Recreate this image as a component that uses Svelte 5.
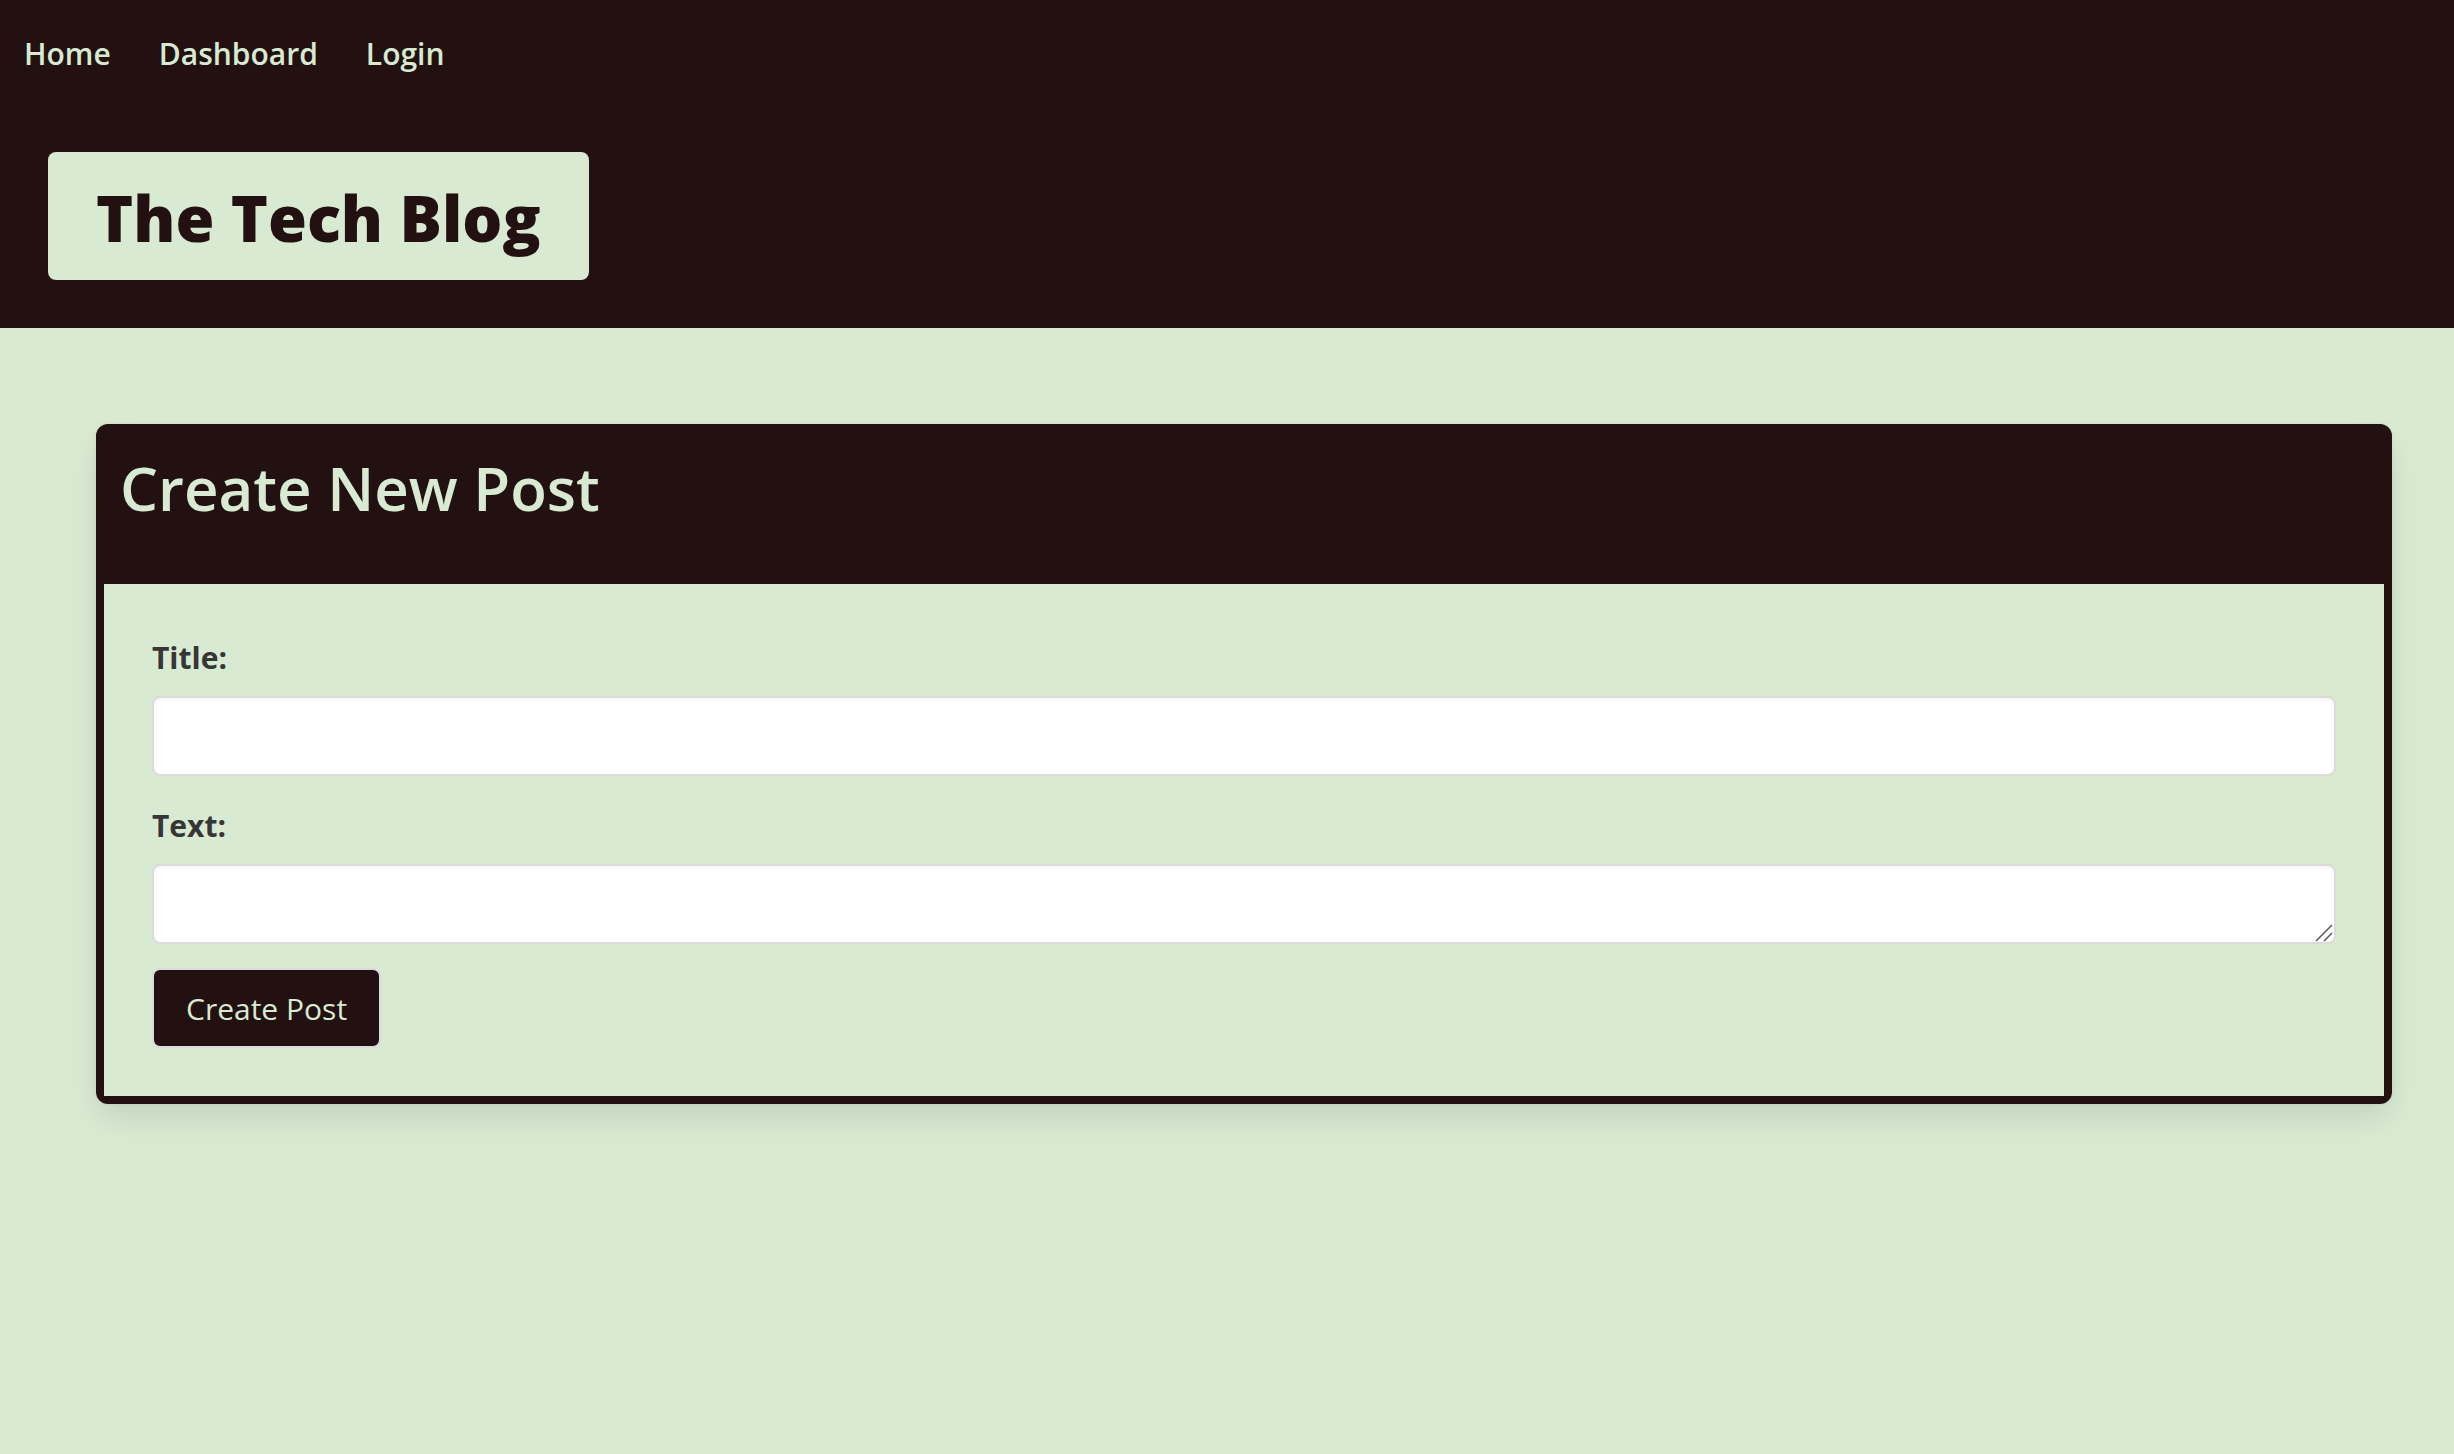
<script>
  const links = [
    { label: 'Home', href: '#home' },
    { label: 'Dashboard', href: '#dashboard' },
    { label: 'Login', href: '#login' }
  ];

  let title = $state('');
  let text = $state('');

  function createPost(event) {
    event.preventDefault();
    title = '';
    text = '';
  }
</script>

<header class="site-header">
  <nav class="nav" aria-label="Main">
    {#each links as link}
      <a class="nav-item" href={link.href}>{link.label}</a>
    {/each}
  </nav>
  <div class="banner">
    <h1 class="brand">The Tech Blog</h1>
  </div>
</header>

<main class="main">
  <section class="card">
    <div class="card-header">
      <h2 class="card-title">Create New Post</h2>
    </div>
    <form class="card-body" onsubmit={createPost}>
      <div class="field">
        <label class="label" for="post-title">Title:</label>
        <input class="control" id="post-title" type="text" bind:value={title} />
      </div>
      <div class="field">
        <label class="label" for="post-text">Text:</label>
        <div class="text-wrap">
          <textarea class="control" id="post-text" rows="1" bind:value={text}></textarea>
          <svg class="grip" viewBox="0 0 18 18" aria-hidden="true">
            <path d="M1 17L17 1M9 17L17 9" />
          </svg>
        </div>
      </div>
      <button class="submit" type="submit">Create Post</button>
    </form>
  </section>
</main>

<style>
  :global(body) {
    margin: 0;
    background: #d8ead2;
    color: #363636;
    font-family: 'Segoe UI', 'Open Sans', 'Noto Sans', sans-serif;
    font-size: 30px;
    line-height: 48px;
  }

  .site-header {
    background: #231111;
  }

  .nav {
    display: flex;
    padding: 30px 0 26px;
  }

  .nav-item {
    padding: 0 24px;
    color: #d8ead2;
    font-weight: 600;
    text-decoration: none;
  }

  .banner {
    display: flex;
    padding: 48px;
  }

  .brand {
    margin: 0;
    padding: 18px 48px 14px;
    border-radius: 8px;
    background: #d8ead2;
    color: #231111;
    font-size: 63px;
    font-weight: 900;
    line-height: 96px;
  }

  .main {
    padding: 96px 62px 96px 96px;
  }

  .card {
    border: 8px solid #231111;
    border-radius: 12px;
    background: #231111;
    box-shadow:
      0 16px 32px -4px rgba(10, 10, 10, 0.1),
      0 0 0 2px rgba(10, 10, 10, 0.02);
  }

  .card-header {
    padding: 20px 16px 60px;
  }

  .card-title {
    margin: 0;
    color: #d8ead2;
    font-size: 60px;
    font-weight: 600;
    line-height: 72px;
  }

  .card-body {
    padding: 48px;
    background: #d8ead2;
  }

  .field {
    margin-bottom: 24px;
  }

  .label {
    display: block;
    margin-bottom: 14px;
    padding-top: 2px;
    font-weight: 700;
  }

  .control {
    display: block;
    box-sizing: border-box;
    width: 100%;
    height: 80px;
    padding: 14px 22px;
    border: 2px solid #dbdbdb;
    border-radius: 8px;
    background: #fff;
    box-shadow: inset 0 2px 4px rgba(10, 10, 10, 0.05);
    color: #363636;
    font: inherit;
  }

  textarea.control {
    resize: vertical;
  }

  textarea.control::-webkit-resizer {
    display: none;
  }

  .text-wrap {
    position: relative;
  }

  .grip {
    position: absolute;
    right: 3px;
    bottom: 2px;
    width: 18px;
    height: 18px;
    fill: none;
    stroke: #555;
    stroke-width: 1.5;
    pointer-events: none;
  }

  .submit {
    display: block;
    height: 80px;
    padding: 2px 32px 0;
    border: 2px solid #dbdbdb;
    border-radius: 8px;
    background: #231111;
    color: #d8ead2;
    font: inherit;
    cursor: pointer;
  }
</style>
